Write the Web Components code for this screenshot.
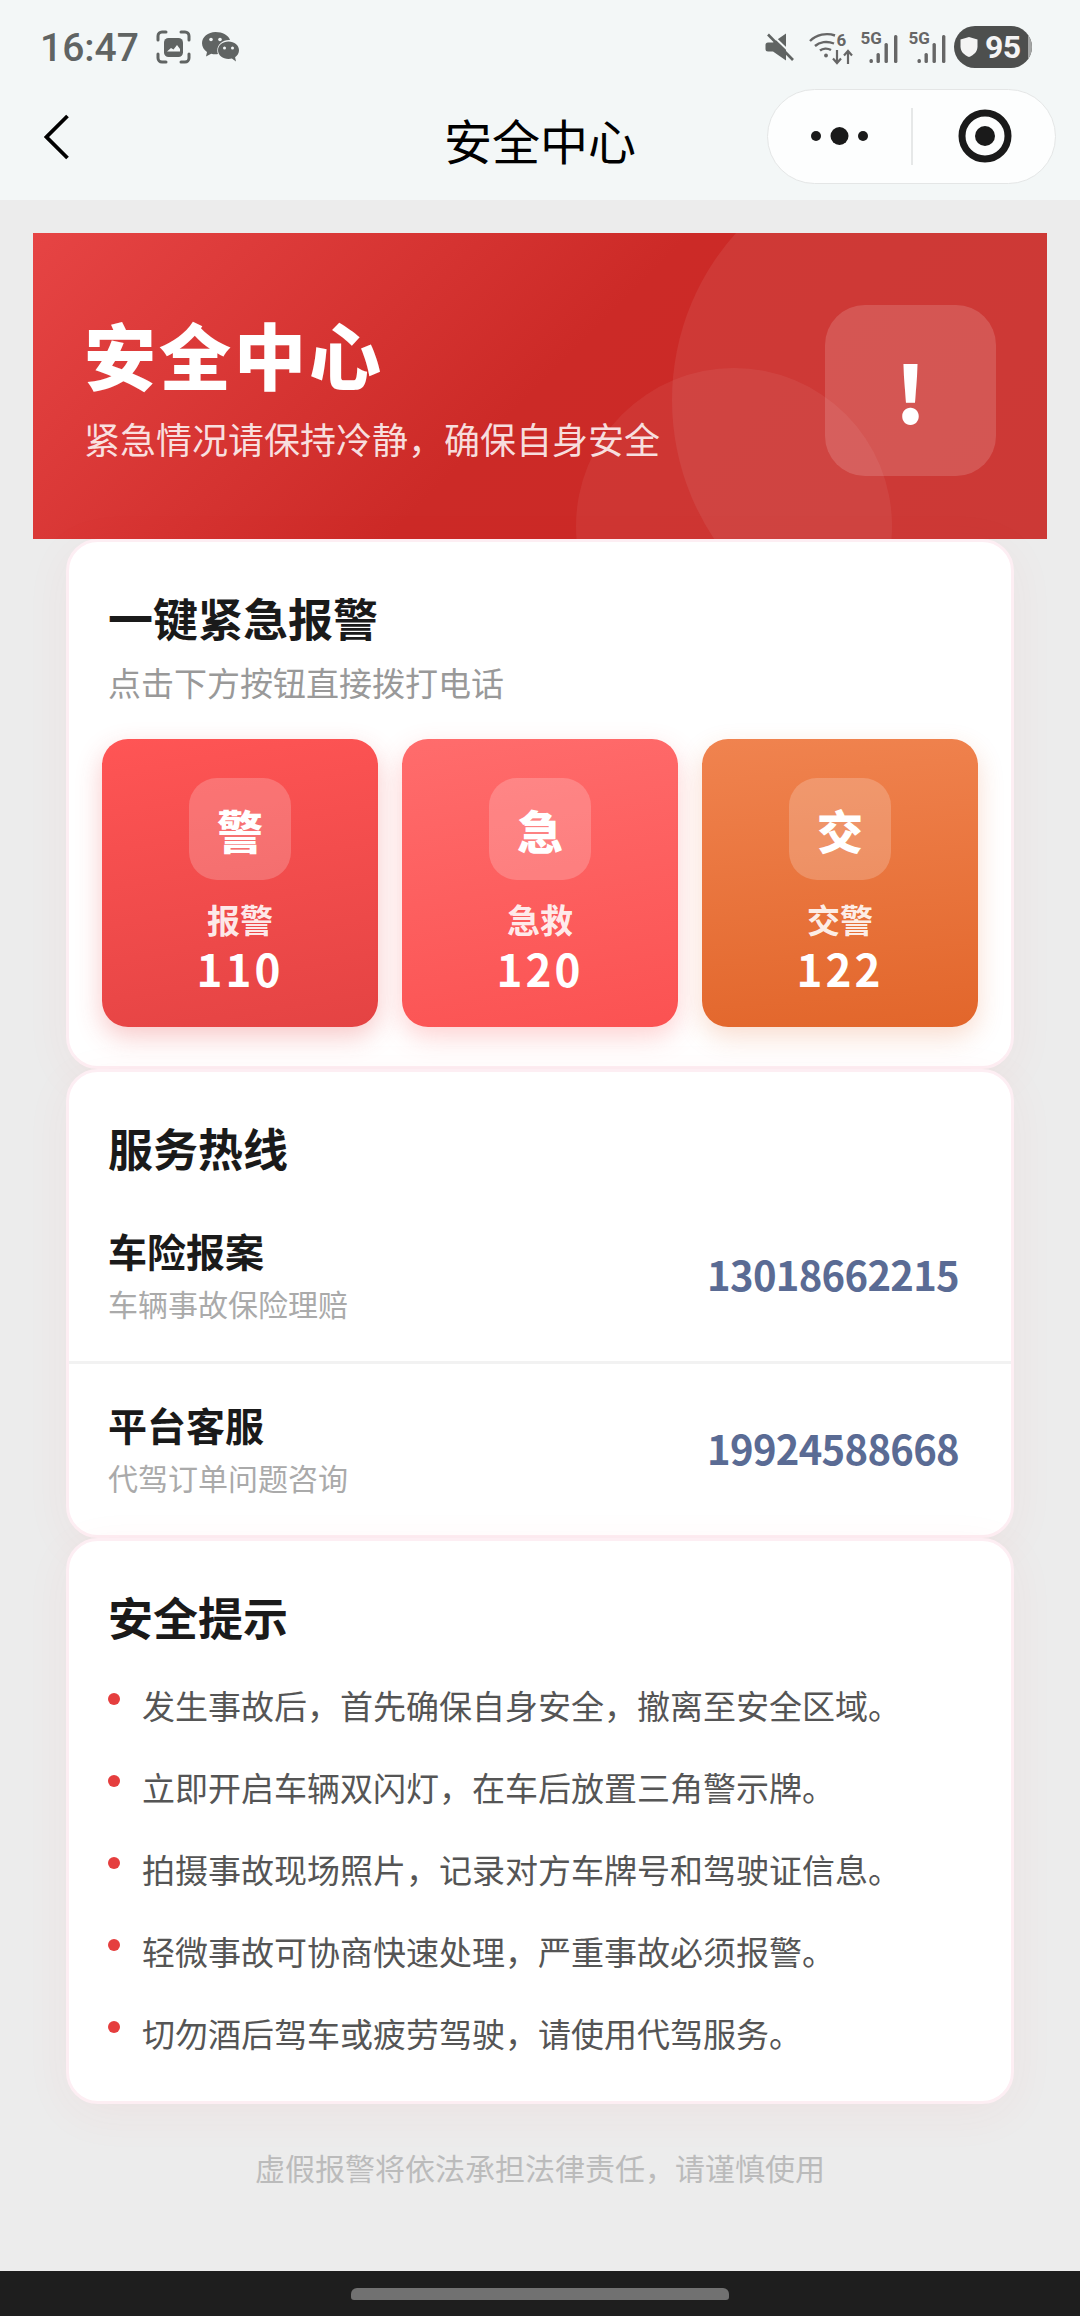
<!DOCTYPE html>
<html lang="zh-CN">
<head>
<meta charset="utf-8">
<title>安全中心</title>
<style>
  html, body { margin: 0; padding: 0; }
  body {
    width: 1080px;
    height: 2316px;
    overflow: hidden;
    display: flex;
    flex-direction: column;
    background: #ececec;
    font-family: "Noto Sans CJK SC", "Noto Sans", sans-serif;
  }
  .cards { display: block; margin: 0 66px; }
</style>
</head>
<body>
  <status-bar></status-bar>
  <nav-bar>安全中心</nav-bar>
  <hero-banner heading="安全中心" note="紧急情况请保持冷静&#xFF0C;确保自身安全"></hero-banner>

  <div class="cards">
    <section-card heading="一键紧急报警" note="点击下方按钮直接拨打电话" kind="first">
      <call-grid>
        <call-button variant="police" glyph="警" label="报警" number="110"></call-button>
        <call-button variant="rescue" glyph="急" label="急救" number="120"></call-button>
        <call-button variant="traffic" glyph="交" label="交警" number="122"></call-button>
      </call-grid>
    </section-card>

    <section-card heading="服务热线" kind="lines">
      <hotline-row name="车险报案" note="车辆事故保险理赔" phone="13018662215"></hotline-row>
      <hotline-row name="平台客服" note="代驾订单问题咨询" phone="19924588668"></hotline-row>
    </section-card>

    <section-card heading="安全提示" kind="tips">
      <tip-item>发生事故后&#xFF0C;首先确保自身安全&#xFF0C;撤离至安全区域。</tip-item>
      <tip-item>立即开启车辆双闪灯&#xFF0C;在车后放置三角警示牌。</tip-item>
      <tip-item>拍摄事故现场照片&#xFF0C;记录对方车牌号和驾驶证信息。</tip-item>
      <tip-item>轻微事故可协商快速处理&#xFF0C;严重事故必须报警。</tip-item>
      <tip-item>切勿酒后驾车或疲劳驾驶&#xFF0C;请使用代驾服务。</tip-item>
    </section-card>
  </div>

  <page-footer>虚假报警将依法承担法律责任&#xFF0C;请谨慎使用</page-footer>
  <home-bar></home-bar>

<script>
class StatusBar extends HTMLElement {
  constructor() {
    super();
    this.shadowDOM = this.attachShadow({mode: "open"});
    this.render();
  }

  signal() {
    return `
      <svg width="38" height="32" viewBox="0 0 38 32">
        <text x="0.500" y="12.500" font-family="Roboto" font-weight="700" font-size="17" fill="#666">5G</text>
        <rect x="9.500" y="28" width="3.400" height="4" rx="1.500" fill="#666"/>
        <rect x="16.500" y="22" width="3.400" height="10" rx="1.500" fill="#666"/>
        <rect x="24.500" y="12" width="3.400" height="20" rx="1.500" fill="#666"/>
        <rect x="34" y="4" width="3.400" height="28" rx="1.500" fill="#666"/>
      </svg>`;
  }

  render() {
    this.shadowDOM.innerHTML = `
    <style>
      :host {
        display: flex;
        align-items: center;
        height: 82px;
        padding: 6px 48px 0 40px;
        background: #f3f7f7;
        color: #606463;
      }
      svg { overflow: visible; }
      .time {
        font: 500 39px/42px Roboto, sans-serif;
        margin: 2px 17px 0 0;
      }
      .left { display: flex; align-items: center; flex: 1; }
      .left svg + svg { margin-left: 11px; }
      .right { display: flex; align-items: center; }
      .mute { margin-right: 15px; }
      .wifi { margin-right: 7px; }
      .sig { margin-right: 10px; display: flex; }
      .sig.last { margin-right: 8px; }
      .battery {
        position: relative;
        display: flex;
        align-items: center;
        gap: 7px;
        box-sizing: border-box;
        width: 78px;
        height: 42px;
        padding-left: 6px;
        border-radius: 21px;
        overflow: hidden;
        background: #4d4f4e;
        color: #f4f4f4;
        font: 700 32px/42px Roboto, sans-serif;
        letter-spacing: -0.5px;
      }
      .battery::after {
        content: "";
        position: absolute;
        top: 0;
        right: 0;
        bottom: 0;
        width: 4px;
        background: #a3a5a4;
      }
    </style>
    <div class="left">
      <span class="time">16:47</span>
      <svg width="35" height="34" viewBox="0 0 35 34" fill="none">
        <path d="M2 10V6a4 4 0 0 1 4-4h4M25 2h4a4 4 0 0 1 4 4v4M33 24v4a4 4 0 0 1-4 4h-4M10 32H6a4 4 0 0 1-4-4v-4" stroke="#606463" stroke-width="3" stroke-linecap="round"/>
        <rect x="8" y="8" width="19" height="19" rx="4.500" fill="#606463"/>
        <path d="M11 21.500l4-3.500 2.500 1.500 3.500-4.500 3 4v2.500z" fill="#f3f7f7"/>
      </svg>
      <svg width="37" height="31" viewBox="0 0 37 31">
        <path d="M13.500 0C6 0 0 5 0 11.200c0 3.600 2 6.700 5 8.800L4 24.500l5.200-2.800c1.400.4 2.800.6 4.300.6 1 0 1.700-.1 2.500-.2-.5-1.200-.7-2.400-.7-3.700 0-5.800 5.400-10.400 11.600-10.400.4 0 .8 0 1.100.1C26.600 3.300 20.600 0 13.500 0z" fill="#606463"/>
        <circle cx="9" cy="7.500" r="1.800" fill="#f3f7f7"/>
        <circle cx="18" cy="7.500" r="1.800" fill="#f3f7f7"/>
        <path d="M26.500 9.500c-5.800 0-10.500 3.900-10.500 8.800s4.700 8.800 10.500 8.800c1.200 0 2.300-.2 3.400-.5l4.100 2.900-.9-4.300c2.400-1.600 3.900-4.100 3.900-6.900 0-4.900-4.700-8.800-10.500-8.800z" fill="#606463"/>
        <circle cx="22.500" cy="16" r="1.500" fill="#f3f7f7"/>
        <circle cx="30.500" cy="16" r="1.500" fill="#f3f7f7"/>
      </svg>
    </div>
    <div class="right">
      <svg class="mute" width="29" height="28" viewBox="0 0 29 28">
        <path d="M3 9.500h5L21 .5v27L8 18.500H3a2.500 2.500 0 0 1-2.500-2.500v-4A2.500 2.500 0 0 1 3 9.500z" fill="#606463"/>
        <path d="M5 0L29 23" stroke="#f3f7f7" stroke-width="2"/>
        <path d="M3 1.500L28 27" stroke="#606463" stroke-width="2.600"/>
      </svg>
      <svg class="wifi" width="44" height="31" viewBox="0 0 44 31" fill="none">
        <path d="M1 9C7.500 2.500 17.500 .5 26 3.500M6 14c4.500-4.200 12-5.200 19-2.500M11 18.500c2.800-2.300 7.500-2.600 11-.5" stroke="#666" stroke-width="2.400"/>
        <circle cx="17" cy="23.500" r="1.900" fill="#666"/>
        <text x="27.500" y="14" font-family="Roboto" font-weight="700" font-size="17" fill="#666">6</text>
        <path d="M28 18v13M24 26.500l4 4.500 4-4.500M39 32V19M35 23.500l4-4.500 4 4.500" stroke="#666" stroke-width="2.200"/>
      </svg>
      <span class="sig">${this.signal()}</span>
      <span class="sig last">${this.signal()}</span>
      <div class="battery">
        <svg width="18" height="20" viewBox="0 0 17 20"><path d="M8.500 0L17 2.500v7c0 5-3.500 8.500-8.500 10.500C3.500 18 0 14.500 0 9.500v-7z" fill="#f4f4f4"/></svg>
        <span>95</span>
      </div>
    </div>`;
  }
}

class NavBar extends HTMLElement {
  constructor() {
    super();
    this.shadowDOM = this.attachShadow({mode: "open"});
    this.shadowDOM.innerHTML = `
    <style>
      :host {
        display: grid;
        grid-template-columns: 1fr auto 1fr;
        align-items: center;
        height: 112px;
        background: #f3f7f7;
        color: #000;
      }
      .back { display: flex; padding-left: 44px; margin-top: -14px; }
      .title { font-size: 48px; line-height: 64px; margin-top: -10px; }
      .capsule {
        justify-self: end;
        display: flex;
        align-items: center;
        box-sizing: border-box;
        width: 289px;
        height: 95px;
        margin: -16px 24px 0 0;
        border: 1.500px solid #e4e6e6;
        border-radius: 48px;
        background: #fdfefe;
      }
      .more { display: flex; justify-content: center; width: 143px; }
      .line { width: 1.500px; height: 57px; background: #e6e8e8; }
      .target { display: flex; justify-content: center; flex: 1; padding-left: 2px; }
    </style>
    <div class="back">
      <svg width="26" height="46" viewBox="0 0 26 46" fill="none">
        <path d="M23.500 2L2.500 23l21 21" stroke="#000" stroke-width="3.800"/>
      </svg>
    </div>
    <div class="title"><slot></slot></div>
    <div class="capsule">
      <div class="more">
        <svg width="58" height="18" viewBox="0 0 58 18" fill="#1a1a1a">
          <circle cx="5" cy="9" r="5"/><circle cx="28.500" cy="9" r="9"/><circle cx="52" cy="9" r="5"/>
        </svg>
      </div>
      <div class="line"></div>
      <div class="target">
        <svg width="54" height="54" viewBox="0 0 54 54">
          <circle cx="27" cy="27" r="23" fill="none" stroke="#1a1a1a" stroke-width="7"/>
          <circle cx="27" cy="27" r="10" fill="#1a1a1a"/>
        </svg>
      </div>
    </div>`;
  }
}

class HeroBanner extends HTMLElement {
  connectedCallback() {
    this.shadowDOM = this.attachShadow({mode: "open"});
    this.shadowDOM.innerHTML = `
    <style>
      :host {
        display: flex;
        align-items: center;
        justify-content: space-between;
        position: relative;
        overflow: hidden;
        box-sizing: border-box;
        height: 306px;
        margin: 33px 33px 0;
        padding: 0 51px 0 51px;
        background: linear-gradient(135deg, #e64444 0%, #cc2a27 50%, #c92a27 100%);
        color: #fff;
      }
      .ring {
        position: absolute;
        border-radius: 50%;
        background: rgba(255, 255, 255, 0.07);
      }
      .ring.big { width: 500px; height: 500px; left: 639px; top: -83px; }
      .ring.small { width: 316px; height: 316px; left: 543px; top: 135px; background: rgba(255, 255, 255, 0.06); }
      .text { position: relative; }
      h1 {
        margin: 0;
        font-size: 72px;
        line-height: 84px;
        font-weight: 900;
        letter-spacing: 3px;
      }
      p {
        margin: 19px 0 0;
        font-size: 36px;
        line-height: 48px;
        color: rgba(255, 255, 255, 0.85);
      }
      .mark {
        position: relative;
        display: flex;
        align-items: center;
        justify-content: center;
        width: 171px;
        height: 171px;
        margin-top: 8px;
        border-radius: 40px;
        background: rgba(255, 255, 255, 0.15);
        font-size: 78px;
        font-weight: 900;
      }
    </style>
    <div class="ring big"></div>
    <div class="ring small"></div>
    <div class="text">
      <h1>${this.getAttribute("heading")}</h1>
      <p>${this.getAttribute("note")}</p>
    </div>
    <div class="mark">!</div>`;
  }
}

class SectionCard extends HTMLElement {
  connectedCallback() {
    const note = this.getAttribute("note");
    this.shadowDOM = this.attachShadow({mode: "open"});
    this.shadowDOM.innerHTML = `
    <style>
      :host {
        display: block;
        position: relative;
        box-sizing: border-box;
        border: 3px solid #fdeef3;
        border-radius: 32px;
        background: #fff;
        box-shadow: 0 10px 48px rgba(229, 62, 62, 0.05);
      }
      :host([kind="first"]) { height: 530px; }
      :host([kind="lines"]) { height: 469px; }
      :host([kind="tips"]) { height: 566px; }
      h2 {
        margin: 0;
        padding: 46px 39px 0;
        font-size: 45px;
        line-height: 60px;
        font-weight: 700;
        color: #1a1a1a;
      }
      p {
        margin: 14px 0 0;
        padding: 0 39px;
        font-size: 33px;
        line-height: 40px;
        color: #999;
      }
      .body { display: block; }
      :host([kind="lines"]) .body { margin-top: 8px; }
      :host([kind="tips"]) .body { margin-top: 34px; }
    </style>
    <h2>${this.getAttribute("heading")}</h2>
    ${note ? `<p>${note}</p>` : ""}
    <div class="body"><slot></slot></div>`;
  }
}

class CallGrid extends HTMLElement {
  constructor() {
    super();
    this.shadowDOM = this.attachShadow({mode: "open"});
    this.shadowDOM.innerHTML = `
    <style>
      :host {
        display: grid;
        grid-template-columns: repeat(3, 276px);
        gap: 24px;
        margin-top: 37px;
        padding-left: 33px;
      }
    </style>
    <slot></slot>`;
  }
}

class CallButton extends HTMLElement {
  connectedCallback() {
    this.shadowDOM = this.attachShadow({mode: "open"});
    this.shadowDOM.innerHTML = `
    <style>
      :host {
        display: flex;
        flex-direction: column;
        align-items: center;
        height: 288px;
        box-sizing: border-box;
        padding-top: 39px;
        border-radius: 26px;
        color: #fff;
      }
      :host([variant="police"]) {
        background: linear-gradient(170deg, #ff5555, #e44343);
        box-shadow: 0 10px 26px rgba(229, 62, 62, 0.28);
      }
      :host([variant="rescue"]) {
        background: linear-gradient(170deg, #ff6c6c, #fb5252);
        box-shadow: 0 10px 26px rgba(251, 82, 82, 0.26);
      }
      :host([variant="traffic"]) {
        background: linear-gradient(175deg, #f0834f, #e2662b);
        box-shadow: 0 10px 26px rgba(226, 102, 43, 0.22);
      }
      .icon {
        display: flex;
        align-items: center;
        justify-content: center;
        width: 102px;
        height: 102px;
        border-radius: 28px;
        background: rgba(255, 255, 255, 0.2);
        font-size: 46px;
        font-weight: 900;
      }
      .label {
        margin-top: 17px;
        font-size: 33px;
        line-height: 44px;
        font-weight: 700;
        color: rgba(255, 255, 255, 0.9);
      }
      .number {
        margin-top: 2px;
        font-size: 44px;
        line-height: 50px;
        font-weight: 700;
        letter-spacing: 3px;
      }
    </style>
    <div class="icon">${this.getAttribute("glyph")}</div>
    <div class="label">${this.getAttribute("label")}</div>
    <div class="number">${this.getAttribute("number")}</div>`;
  }
}

class HotlineRow extends HTMLElement {
  connectedCallback() {
    this.shadowDOM = this.attachShadow({mode: "open"});
    this.shadowDOM.innerHTML = `
    <style>
      :host {
        display: flex;
        align-items: center;
        justify-content: space-between;
        padding: 39px 52px 38px 39px;
      }
      :host(:not(:last-child)) { border-bottom: 3px solid #f2f2f2; }
      :host(:last-child) { padding-top: 35px; }
      .name {
        font-size: 39px;
        line-height: 50px;
        font-weight: 600;
        color: #1a1a1a;
      }
      .note {
        margin-top: 8px;
        font-size: 30px;
        line-height: 40px;
        color: #aaa;
      }
      .phone {
        font-size: 40px;
        line-height: 50px;
        font-weight: 700;
        letter-spacing: -0.7px;
        color: #5a6b94;
      }
    </style>
    <div>
      <div class="name">${this.getAttribute("name")}</div>
      <div class="note">${this.getAttribute("note")}</div>
    </div>
    <div class="phone">${this.getAttribute("phone")}</div>`;
  }
}

class TipItem extends HTMLElement {
  constructor() {
    super();
    this.shadowDOM = this.attachShadow({mode: "open"});
    this.shadowDOM.innerHTML = `
    <style>
      :host {
        display: flex;
        gap: 22px;
        padding-left: 39px;
        margin-bottom: 34px;
        font-size: 33px;
        line-height: 48px;
        color: #555;
      }
      i {
        flex: none;
        width: 12px;
        height: 12px;
        margin-top: 12px;
        border-radius: 50%;
        background: #e53e3e;
      }
    </style>
    <i></i>
    <span><slot></slot></span>`;
  }
}

class PageFooter extends HTMLElement {
  constructor() {
    super();
    this.shadowDOM = this.attachShadow({mode: "open"});
    this.shadowDOM.innerHTML = `
    <style>
      :host {
        display: block;
        margin-top: 43px;
        text-align: center;
        font-size: 30px;
        line-height: 40px;
        color: #bbb;
      }
    </style>
    <slot></slot>`;
  }
}

class HomeBar extends HTMLElement {
  constructor() {
    super();
    this.shadowDOM = this.attachShadow({mode: "open"});
    this.shadowDOM.innerHTML = `
    <style>
      :host {
        display: flex;
        justify-content: center;
        box-sizing: border-box;
        height: 45px;
        margin-top: auto;
        padding-top: 17px;
        background: #1e1e1e;
      }
      div { width: 378px; height: 12px; border-radius: 6px 6px 3px 3px; background: #717171; }
    </style>
    <div></div>`;
  }
}

customElements.define("status-bar", StatusBar);
customElements.define("nav-bar", NavBar);
customElements.define("hero-banner", HeroBanner);
customElements.define("section-card", SectionCard);
customElements.define("call-grid", CallGrid);
customElements.define("call-button", CallButton);
customElements.define("hotline-row", HotlineRow);
customElements.define("tip-item", TipItem);
customElements.define("page-footer", PageFooter);
customElements.define("home-bar", HomeBar);
</script>
</body>
</html>
